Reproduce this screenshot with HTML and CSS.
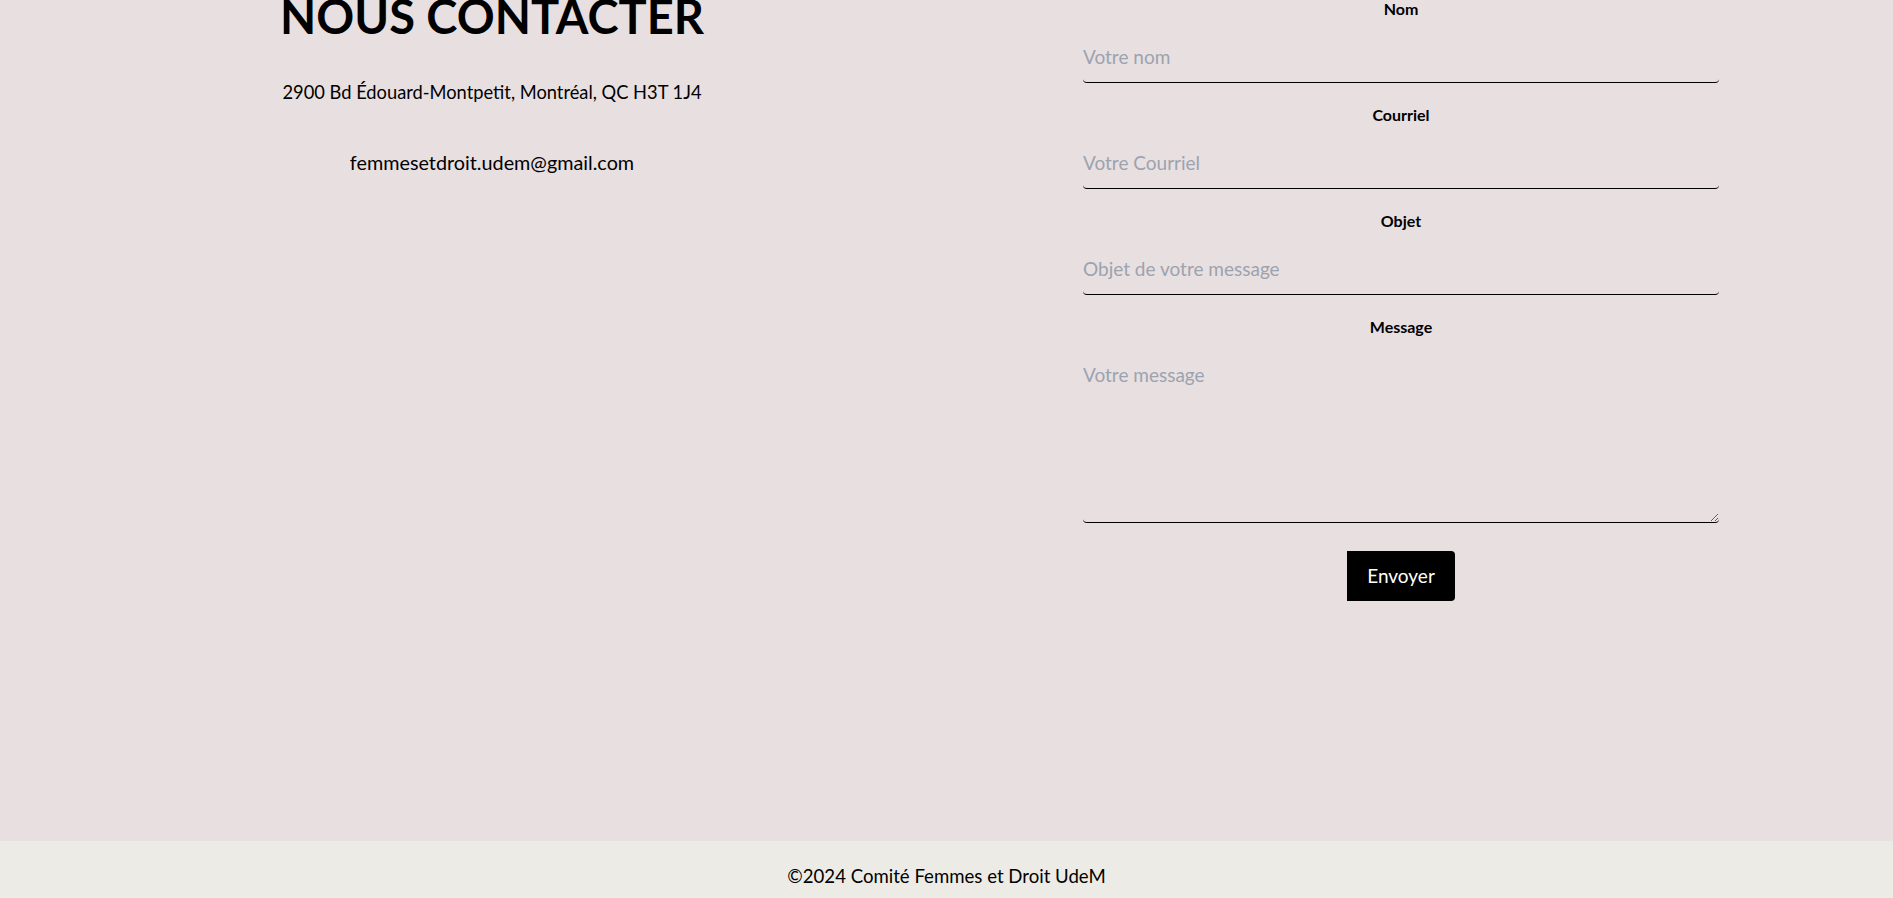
FILE: index.html
```html
<!DOCTYPE html>
<html lang="fr">
<head>
<meta charset="utf-8">
<title>Nous contacter</title>
<link rel="stylesheet" href="styles.css">
</head>
<body>
<main class="page">
  <section class="contact">
    <div class="info">
      <h1 class="title">NOUS CONTACTER</h1>
      <p class="address">2900 Bd Édouard-Montpetit, Montréal, QC H3T 1J4</p>
      <p class="email">femmesetdroit.udem@gmail.com</p>
    </div>
    <form class="form">
      <div class="field">
        <label class="label" for="nom">Nom</label>
        <input class="input" id="nom" type="text" placeholder="Votre nom">
      </div>
      <div class="field">
        <label class="label" for="courriel">Courriel</label>
        <input class="input" id="courriel" type="email" placeholder="Votre Courriel">
      </div>
      <div class="field">
        <label class="label" for="objet">Objet</label>
        <input class="input" id="objet" type="text" placeholder="Objet de votre message">
      </div>
      <div class="field field-last">
        <label class="label" for="message">Message</label>
        <textarea class="input textarea" id="message" placeholder="Votre message"></textarea>
      </div>
      <div class="actions">
        <button class="button" type="button">Envoyer</button>
      </div>
    </form>
  </section>
</main>
<footer class="footer">
  <p class="copyright">©2024 Comité Femmes et Droit UdeM</p>
</footer>
</body>
</html>
```

FILE: styles.css
```css
* {
  box-sizing: border-box;
}

html, body {
  margin: 0;
  padding: 0;
}

body {
  font-family: Lato, "Open Sans", sans-serif;
  color: #000;
  background: #e8dfe0;
}

.page {
  height: 841px;
  display: flex;
  flex-direction: column;
  background: #e8dfe0;
}

.contact {
  margin-top: -7px;
  padding: 0 174px;
  display: flex;
  justify-content: space-between;
  align-items: flex-start;
}

.info {
  width: 636px;
  text-align: center;
}

.title {
  margin: 0;
  font-size: 47px;
  line-height: 47px;
  font-weight: 700;
  letter-spacing: 0;
}

.address {
  margin: 38px 0 0;
  font-size: 18.3px;
  line-height: 28px;
}

.email {
  margin: 42px 0 0;
  font-size: 19.8px;
  line-height: 28px;
}

.form {
  width: 636px;
  padding-top: 4px;
  display: flex;
  flex-direction: column;
}

.field {
  display: flex;
  flex-direction: column;
  margin-bottom: 20px;
}

.field-last {
  margin-bottom: 28px;
}

.label {
  display: block;
  text-align: center;
  font-size: 16px;
  line-height: 24px;
  font-weight: 700;
  margin-bottom: 10px;
}

.input {
  display: block;
  width: 100%;
  font-family: Lato, "Open Sans", sans-serif;
  font-size: 19px;
  line-height: 28px;
  padding: 12px 0 11px;
  color: #000;
  background: transparent;
  border: none;
  border-bottom: 1px solid #000;
  border-radius: 4px;
  outline: none;
}

.input::placeholder {
  color: #9ca3af;
  opacity: 1;
}

.textarea {
  height: 174px;
  resize: vertical;
}

.actions {
  display: flex;
  justify-content: center;
}

.button {
  font-family: Lato, "Open Sans", sans-serif;
  font-size: 19px;
  line-height: 26px;
  padding: 12px 20px;
  width: 108px;
  height: 50px;
  color: #fff;
  background: #000;
  border: none;
  border-radius: 0 4px 4px 0;
  cursor: pointer;
}

.footer {
  background: #edebe6;
  padding: 21px 0 22px;
  text-align: center;
}

.copyright {
  margin: 0;
  font-size: 18.6px;
  line-height: 28px;
}
```
